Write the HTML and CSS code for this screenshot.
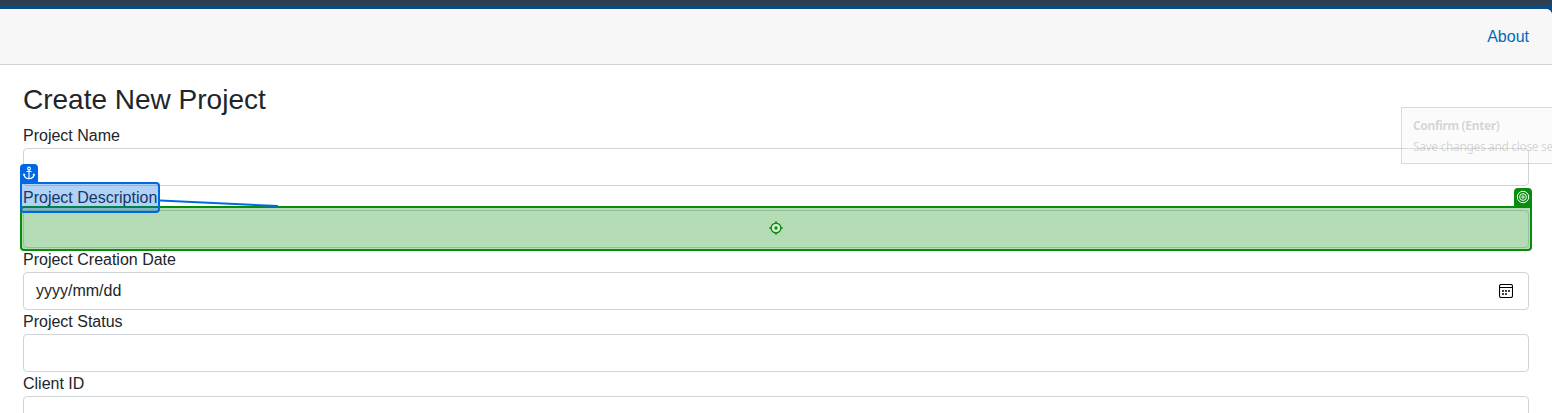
FILE: index.html
```html
<!DOCTYPE html>
<html lang="en">
<head>
<meta charset="utf-8">
<title>Create New Project</title>
<link rel="stylesheet" href="styles.css">
</head>
<body>
<div class="window-bar"></div>
<div class="window">
  <header class="header"><a class="nav-link">About</a></header>
  <main class="content">
    <h1 class="title">Create New Project</h1>
    <form class="form">
      <div class="label">Project Name</div>
      <div class="field"></div>
      <div class="label">Project Description</div>
      <div class="field"></div>
      <div class="label">Project Creation Date</div>
      <div class="field field-date"><span>yyyy/mm/dd</span>
        <svg class="calendar" viewBox="0 0 14 14"><rect x=".5" y=".5" width="13" height="13" rx="1.8" fill="none" stroke="#000" stroke-width="1.1"/><path d="M1 3.5H13" stroke="#000"/><path d="M6 6h2v2H6zM9 6h2v2H9zM3 6h2v2H3zM3 9h2v2H3zM6 9h2v2H6z" fill="#444"/></svg>
      </div>
      <div class="label">Project Status</div>
      <div class="field"></div>
      <div class="label">Client ID</div>
      <div class="field"></div>
    </form>
  </main>
</div>
<div class="target-box">
  <svg class="crosshair" viewBox="0 0 14 14"><circle cx="7" cy="7" r="4.8" fill="#d9eed9" stroke="#078c0b" stroke-width="1.4"/><circle cx="7" cy="7" r="1.7" fill="#078c0b"/><path d="M7 .3V2.8M7 11.2V13.7M.3 7H2.8M11.2 7H13.7" stroke="#078c0b" stroke-width="1.5"/></svg>
</div>
<div class="badge target-badge"><svg viewBox="0 0 14 14" fill="none" stroke="#fff"><circle cx="7" cy="7" r="5.7"/><circle cx="7" cy="7" r="3.4"/><circle cx="7" cy="7" r="1.2"/></svg></div>
<div class="anchor-box"></div>
<div class="badge anchor-badge"><svg viewBox="0 0 14 14" fill="none" stroke="#fff" stroke-width="1.1"><circle cx="7" cy="2.5" r="1.4"/><path d="M7 4V12.5M4.5 5.5H9.5M2 8.4C2.2 11 4.2 12.6 7 12.6S11.8 11 12 8.4M1.3 9.5L2 8.2L3.2 9.2M12.7 9.5L12 8.2L10.8 9.2"/></svg></div>
<svg class="connector" viewBox="0 0 120 10"><path d="M0 2.6L118 8" stroke="#0068e3" stroke-width="2"/></svg>
<div class="tooltip"><strong>Confirm (Enter)</strong><span>Save changes and close se</span></div>
</body>
</html>
```
FILE: styles.css
```css
* { box-sizing: border-box; }
body {
  margin: 0;
  width: 1552px;
  height: 413px;
  position: relative;
  overflow: hidden;
  background: #0b4c80;
  color: #212529;
  font: 16px/24px "Liberation Sans", Arial, sans-serif;
}
.window-bar { height: 5px; background: #2c3e50; border-bottom-right-radius: 5px; }
.window { margin-top: 4px; height: 410px; background: #fff; border-top-right-radius: 6px; overflow: hidden; }
.header {
  height: 56px;
  padding: 0 23px;
  display: flex;
  align-items: center;
  justify-content: flex-end;
  background: #f7f7f7;
  border-bottom: 1px solid #d2d3d5;
}
.nav-link { color: #006bb7; }
.content { padding: 18px 23px 0; }
.title { margin: 0 0 7px; font-size: 28px; line-height: 34px; font-weight: 400; }
.label { height: 24px; }
.field { height: 38px; border: 1px solid #ced4da; border-radius: 4px; background: #fff; }
.field-date { display: flex; align-items: center; justify-content: space-between; padding: 0 15px 0 12px; }
.calendar { width: 14px; height: 14px; }
.target-box {
  position: absolute; left: 20px; top: 206px; width: 1512px; height: 45px;
  display: flex; align-items: center; justify-content: center; padding-bottom: 1px;
  border: 2px solid #078c0b; border-radius: 4px; border-top-right-radius: 0;
  background: rgba(7, 140, 11, .3);
}
.crosshair { width: 14px; height: 14px; }
.badge { position: absolute; width: 18px; height: 19px; padding: 2px; border-radius: 4px 4px 0 0; }
.badge svg { display: block; width: 14px; height: 14px; }
.target-badge { left: 1514px; top: 188px; background: #078c0b; }
.anchor-box {
  position: absolute; left: 20px; top: 182px; width: 140px; height: 31px;
  border: 2px solid #0068e3; border-radius: 0 4px 4px 4px; background: rgba(0, 104, 227, .3);
}
.anchor-badge { left: 20px; top: 164px; background: #0068e3; }
.connector { position: absolute; left: 160px; top: 198px; width: 120px; height: 10px; }
.tooltip {
  position: absolute; left: 1401px; top: 107px; width: 160px; height: 57px;
  padding: 7px 11px; display: flex; flex-direction: column;
  border: 1px solid rgba(0, 0, 0, .13); background: rgba(240, 240, 240, .25);
  color: rgba(80, 80, 80, .23); font: 12px/21px "Noto Sans", "Open Sans", sans-serif;
  letter-spacing: -.35px; white-space: nowrap;
}
```
